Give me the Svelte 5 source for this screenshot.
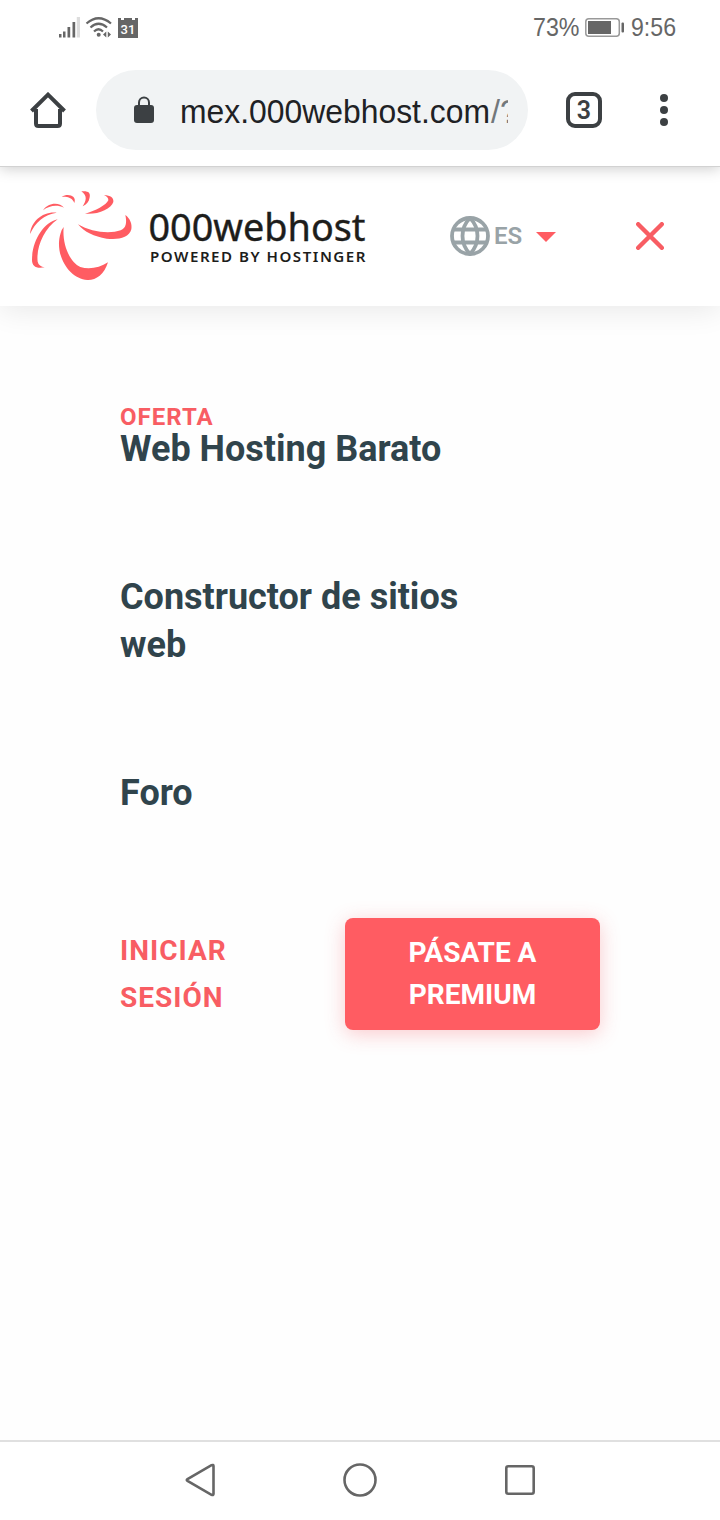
<script>
  const menu = [
    { tag: 'OFERTA', label: 'Web Hosting Barato' },
    { label: 'Constructor de sitios web' },
    { label: 'Foro' }
  ];
</script>

<div class="screen">
  <div class="status">
    <svg class="signals" width="90" height="36" viewBox="0 0 90 36" fill="#666">
      <rect x="9" y="24" width="2.5" height="3.5" />
      <rect x="13" y="21.500" width="2.500" height="6" />
      <rect x="17.500" y="17" width="2.700" height="10.500" />
      <rect x="22.500" y="12" width="2.700" height="15.500" />
      <rect x="26.800" y="7" width="3.200" height="20.500" fill="#ddd" />
      <g fill="none" stroke="#666" stroke-width="2.200">
        <path d="M36.500 13.500Q48.500 3 61 13.500" />
        <path d="M40.500 17.500Q48.500 10 57 17.500" />
        <path d="M44 21.500Q48.500 17 53 21.500" />
      </g>
      <circle cx="48.700" cy="24.800" r="2" />
      <path d="M56.300 21.500V27.500L53 24.500ZM57.800 21.500V27.500L61 24.500Z" />
      <path d="M68 8h3v2h3V8h8v2h3V8h3v20H68Z" />
      <text x="78" y="24.300" text-anchor="middle" font-size="13" fill="#fff" class="cal">31</text>
    </svg>
    <svg class="power" width="150" height="36" viewBox="0 0 150 36" fill="#666">
      <text x="3" y="26" font-size="25" textLength="46.500" lengthAdjust="spacingAndGlyphs">73%</text>
      <rect x="55.800" y="8.800" width="33.500" height="17.500" rx="3" fill="#fff" stroke="#999" stroke-width="1.500" />
      <rect x="58" y="11" width="23" height="13" />
      <rect x="91.500" y="12.500" width="2.500" height="10" rx="1" />
      <text x="101" y="26" font-size="25" textLength="45" lengthAdjust="spacingAndGlyphs">9:56</text>
    </svg>
  </div>

  <div class="toolbar">
    <svg class="home" width="36" height="36" viewBox="0 0 36 36" fill="none" stroke="#3c4043" stroke-width="4" stroke-linejoin="round">
      <path d="M6 17V31.500Q6 34 8.500 34H27.500Q30 34 30 31.500V17" />
      <path d="M1.500 19L18 2.700L34.500 19" stroke-linejoin="miter" />
    </svg>
    <div class="address">
      <svg width="20" height="28" viewBox="0 0 20 28">
        <rect y="9" width="20" height="18" rx="3" fill="#3c4043" />
        <path d="M5 10V6.500a5 5 0 0 1 10 0V10" fill="none" stroke="#3c4043" stroke-width="2" />
      </svg>
      <svg class="url" width="328" height="50" viewBox="0 0 328 50">
        <text x="0" y="37.500" font-size="33.500" fill="#202124" textLength="310" lengthAdjust="spacingAndGlyphs">mex.000webhost.com</text>
        <text x="311" y="37.500" font-size="33.500" fill="#72777b" textLength="27" lengthAdjust="spacingAndGlyphs">/?</text>
      </svg>
    </div>
    <div class="tabs">3</div>
    <div class="dots"><i></i><i></i><i></i></div>
  </div>

  <header>
    <svg class="logo" width="360" height="110" viewBox="0 0 360 110">
      <g fill="#ff5c62" transform="scale(.33333)">
        <path d="M30 162C34 124 67 94 110 98C72 103 46 127 30 162Z" />
        <path d="M69 91C82 68 118 64 132 83C112 73 88 76 69 91Z" />
        <path d="M125 50C145 39 171 48 163 69C158 54 144 49 125 50Z" />
        <path d="M184 34C205 32 212 38 209 52C207 66 200 74 188 79C199 63 203 47 184 34Z" />
        <path d="M252 45C272 46 282 53 280 66C274 87 232 105 195 101C226 93 259 75 265 61C266 54 260 48 252 45Z" />
        <path d="M113 118C70 128 36 183 36 240C36 259 49 267 74 262C63 260 55 255 53 245C48 205 70 147 113 118Z" />
        <path d="M174 133C213 157 270 163 302 151C319 144 321 127 316 105C330 115 337 132 334 148C327 175 293 180 260 176C222 170 193 156 174 133Z" />
        <path d="M131 141C126 194 149 246 181 261C208 270 239 263 264 247C252 285 228 301 202 300C148 297 101 224 122 159Q125 148 131 141Z" />
      </g>
      <g class="brand" fill="#1d1d1b">
        <text x="128.500" y="60.500" font-size="38" textLength="217" lengthAdjust="spacingAndGlyphs" stroke="#1d1d1b" stroke-width=".4">000webhost</text>
        <text x="130" y="82" font-size="15" font-weight="600" textLength="217" letter-spacing="1.500" lengthAdjust="spacingAndGlyphs">POWERED BY HOSTINGER</text>
      </g>
    </svg>
    <div class="language">
      <svg width="40" height="40" viewBox="0 0 40 40" fill="none" stroke="#99a3a7" stroke-width="3.800">
        <circle cx="20" cy="20" r="18" />
        <path d="M4 13.500H36M4 26.500H36" />
        <path d="M20 2C10 12 10 28 20 38C30 28 30 12 20 2Z" />
      </svg>
      <span>ES</span>
      <svg class="caret" width="20" height="10" viewBox="0 0 20 10"><path d="M0 0H20L10 10Z" fill="#ff5c62" /></svg>
    </div>
    <svg class="close" width="28" height="28" viewBox="0 0 28 28" stroke="#f85d63" stroke-width="4.400" stroke-linecap="round"><path d="M2.200 2.200L25.800 25.800M25.800 2.200L2.200 25.800" /></svg>
  </header>

  <main>
    <nav>
      {#each menu as item}
        <div class="item">
          {#if item.tag}<small>{item.tag}</small>{/if}
          <strong>{item.label}</strong>
        </div>
      {/each}
    </nav>
    <div class="actions">
      <div class="login">INICIAR<br />SESIÓN</div>
      <div class="premium">PÁSATE A<br />PREMIUM</div>
    </div>
  </main>

  <footer>
    <svg width="32" height="36" viewBox="0 0 32 36"><path d="M26.500 3.200Q28.500 2.500 28.500 4V32Q28.500 33.500 26.500 32.800L2.500 19Q1 18 2.500 17Z" /></svg>
    <svg width="34" height="36" viewBox="0 0 34 36"><circle cx="16" cy="18" r="15.500" /></svg>
    <svg width="30" height="36" viewBox="0 0 30 36"><rect x="1.300" y="4.300" width="27.400" height="27.400" rx="2" /></svg>
  </footer>
</div>

<style>
  :global(body) { margin: 0; background: #fff; }
  .screen { width: 720px; height: 1520px; display: flex; flex-direction: column; background: #fefefe; font-family: Roboto, sans-serif; overflow: hidden; }
  svg { display: block; flex: none; }
  .status { height: 56px; flex: none; display: flex; justify-content: space-between; padding: 10px 40px 0 50px; box-sizing: border-box; font-family: "Liberation Sans", sans-serif; background: #fff; z-index: 3; }
  .cal { font-family: Roboto, sans-serif; font-weight: 500; }
  .toolbar { height: 111px; flex: none; display: flex; align-items: center; padding: 0 50px 2px 30px; box-sizing: border-box; background: #fff; border-bottom: 1px solid #d2d2d2; box-shadow: 0 1px 14px rgba(0, 0, 0, .22); z-index: 2; }
  .address { margin-left: 30px; width: 432px; height: 80px; border-radius: 40px; background: #f1f3f4; display: flex; align-items: center; gap: 26px; padding-left: 38px; box-sizing: border-box; }
  .url { font-family: "Liberation Sans", sans-serif; overflow: hidden; }
  .tabs { margin-left: 38px; width: 36px; height: 36px; border: 4px solid #3c4043; border-radius: 9px; box-sizing: border-box; text-align: center; font: 600 25px/29px Roboto, sans-serif; color: #3c4043; }
  .dots { margin-left: auto; width: 10px; display: flex; flex-direction: column; gap: 4px; }
  .dots i { width: 8px; height: 8px; border-radius: 50%; background: #3c4043; }
  header { height: 139px; flex: none; display: flex; align-items: center; padding: 0 56px 1px 20px; box-sizing: border-box; background: #fff; box-shadow: 0 4px 28px rgba(0, 0, 0, .09); z-index: 1; }
  .logo { margin-bottom: 3px; }
  .brand { font-family: "Noto Sans", sans-serif; }
  .language { margin-left: 70px; display: flex; align-items: center; color: #99a3a7; font-size: 24px; font-weight: 600; }
  .language span { margin-left: 4px; width: 28px; }
  .caret { margin: 1px 0 0 14px; }
  .close { margin-left: auto; }
  main { flex: 1; padding: 95px 120px 0; box-sizing: border-box; }
  nav { display: flex; flex-direction: column; gap: 100px; }
  .item { display: flex; flex-direction: column; width: 380px; }
  small { height: 24px; font-size: 24px; line-height: 33px; font-weight: 700; letter-spacing: 1px; color: #f85d63; }
  strong { font-size: 36px; line-height: 48px; font-weight: 700; color: #30444c; }
  .actions { margin-top: 101px; display: flex; justify-content: space-between; align-items: flex-start; }
  .login { padding-top: 9px; font-size: 28px; line-height: 47px; letter-spacing: 1px; font-weight: 700; color: #f85d63; }
  .premium { width: 255px; height: 112px; padding-top: 14px; box-sizing: border-box; border-radius: 8px; background: #ff5c62; color: #fff; font-size: 28px; line-height: 42px; font-weight: 700; text-align: center; box-shadow: 0 4px 20px rgba(240, 70, 80, .28); }
  footer { height: 80px; flex: none; border-top: 2px solid #e0e0e0; box-sizing: border-box; display: flex; justify-content: space-between; align-items: center; padding: 0 185px 2px; background: #fff; }
  footer svg { fill: none; stroke: #666; stroke-width: 2.600; overflow: visible; }
</style>
